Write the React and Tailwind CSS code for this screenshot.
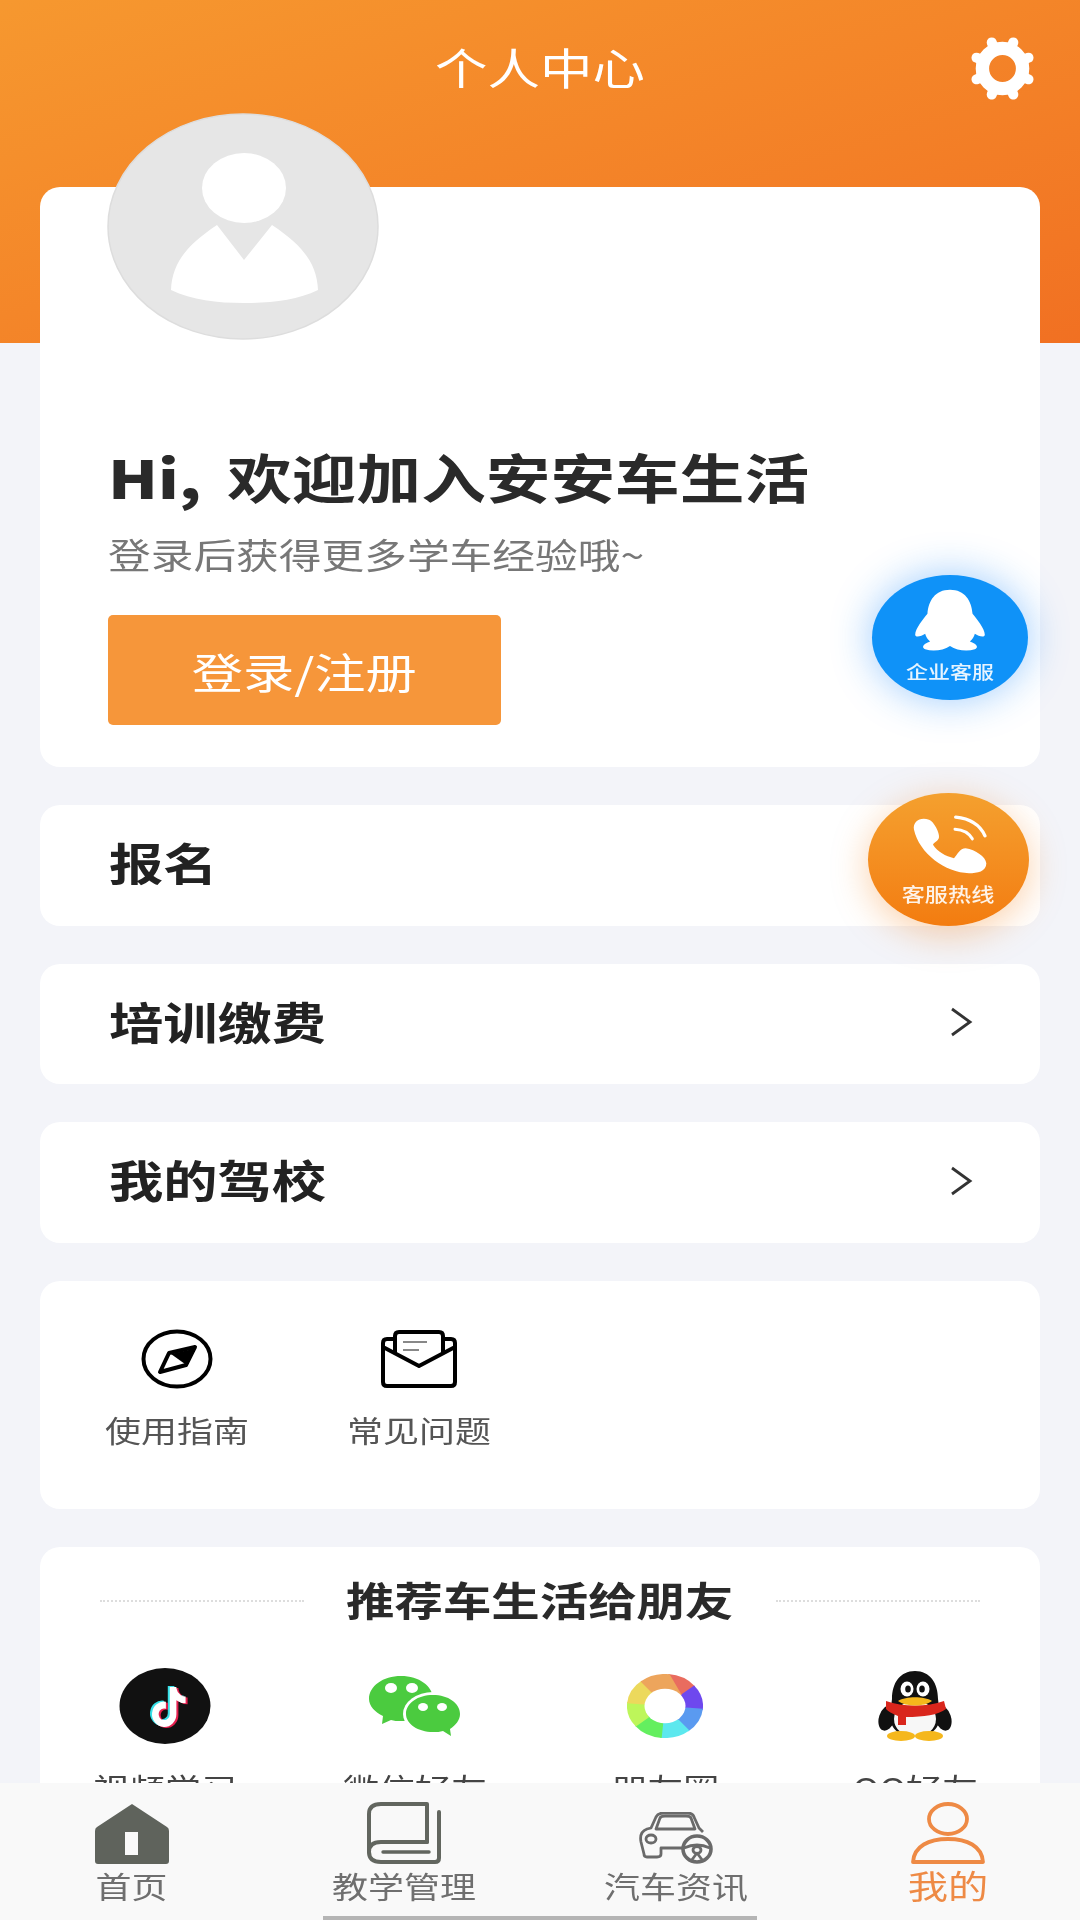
import React from 'react';

// all text in the shot is stretched sideways, so it goes through this
function Wide({ className = '', children }) {
  return <span className={'inline-block whitespace-nowrap scale-x-[1.22] ' + className}>{children}</span>;
}

function Chevron() {
  return (
    <svg width="24" height="32" viewBox="0 0 24 32" fill="none" stroke="#333" strokeWidth="2.8">
      <polyline points="3,3 21,16 3,29" />
    </svg>
  );
}

const GEAR_TEETH = [22.5, 67.5, 112.5, 157.5, 202.5, 247.5, 292.5, 337.5];

function GearIcon() {
  return (
    <svg className="justify-self-end -mt-[3px] -mr-[4px] w-[81px] h-[67px]" viewBox="0 0 100 100" fill="none" stroke="#fff">
      <circle cx="50" cy="50" r="30" strokeWidth="20" />
      {GEAR_TEETH.map((deg) => (
        <line key={deg} x1="50" y1="18" x2="50" y2="8" strokeWidth="15" strokeLinecap="round" transform={`rotate(${deg} 50 50)`} />
      ))}
    </svg>
  );
}

function Avatar() {
  return (
    <svg className="w-[272px] h-[227px]" viewBox="0 0 272 227">
      <ellipse cx="136" cy="113.5" rx="135" ry="112.5" fill="#e6e6e6" stroke="#dddddd" strokeWidth="1.5" />
      <ellipse cx="137" cy="75" rx="42" ry="35" fill="#fff" />
      <path d="M110 112 L137 147 L165 112 C195 132 210 150 211 177 C190 187 165 190 137 190 C110 190 85 187 64 177 C65 150 80 132 110 112 Z" fill="#fff" />
    </svg>
  );
}

function CompassIcon() {
  return (
    <svg className="w-[72px] h-[60px]" viewBox="0 0 72 60" fill="none" stroke="#000" strokeWidth="4">
      <ellipse cx="36" cy="30" rx="33.5" ry="27.5" />
      <path d="M54 18 L28 24 L19 43 L45 36 Z" strokeLinejoin="round" />
      <path d="M30 25 L52 20 L44 35 Z" fill="#000" stroke="none" />
    </svg>
  );
}

function EnvelopeIcon() {
  return (
    <svg className="w-[76px] h-[58px]" viewBox="0 0 76 58" fill="none" stroke="#000" strokeWidth="4" strokeLinejoin="round">
      <path d="M14 9 H6 Q2 9 2 13 V52 Q2 56 6 56 H70 Q74 56 74 52 V13 Q74 9 70 9 H62" />
      <path d="M2 17 L38 36 L74 17" />
      <path d="M14 24 V6 Q14 2 18 2 H58 Q62 2 62 6 V24" />
      <path d="M22 12 H46 M22 20 H38" stroke="#888" strokeWidth="2" />
    </svg>
  );
}

const TIKTOK = 'M448,209.91a210.06,210.06,0,0,1-122.77-39.25V349.38A162.55,162.55,0,1,1,185,188.31V278.2a74.62,74.62,0,1,0,52.23,71.18V0l88,0a121.18,121.18,0,0,0,1.86,22.17h0A122.18,122.18,0,0,0,381,102.39a121.43,121.43,0,0,0,67,20.14Z';

function TiktokIcon() {
  return (
    <svg className="w-[92px] h-[76px]" viewBox="0 0 92 76">
      <ellipse cx="46" cy="38" rx="45.5" ry="38" fill="#111" />
      <g transform="translate(31 18) scale(0.075 0.078)"><path d={TIKTOK} fill="#36e0e8" /></g>
      <g transform="translate(35 20) scale(0.075 0.078)"><path d={TIKTOK} fill="#e6204f" /></g>
      <g transform="translate(33 19) scale(0.075 0.078)"><path d={TIKTOK} fill="#fff" /></g>
    </svg>
  );
}

function WechatIcon() {
  return (
    <svg className="w-[92px] h-[60px]" viewBox="0 0 92 60">
      <path d="M32 0 C50 0 64 10 64 23 C64 36 50 45 32 45 C28 45 25 45 22 44 L13 48 L14 40 C6 36 0 30 0 23 C0 10 14 0 32 0 Z" fill="#4bcb3f" />
      <ellipse cx="64" cy="38" rx="30" ry="22" fill="#fff" />
      <path d="M64 19 C79 19 91 27 91 38 C91 44 87 49 81 53 L82 60 L74 55 C71 56 68 56 64 56 C49 56 37 48 37 38 C37 27 49 19 64 19 Z" fill="#4bcb3f" />
      <ellipse cx="22" cy="12" rx="6" ry="5" fill="#fff" />
      <ellipse cx="43" cy="12" rx="6" ry="5" fill="#fff" />
      <ellipse cx="54" cy="31" rx="5" ry="4" fill="#fff" />
      <ellipse cx="73" cy="31" rx="5" ry="4" fill="#fff" />
    </svg>
  );
}

// aperture ring for the moments icon, one blade per colour going clockwise
const BLADES = ['#e96c5f', '#6e48ee', '#5a9af0', '#5ce8ee', '#64ef5f', '#bdf65a', '#ecd95c', '#eda55c'];

function bladePath(i) {
  const pt = (deg, r) => {
    const a = (deg * Math.PI) / 180;
    return `${(50 + r * Math.cos(a)).toFixed(2)} ${(50 + r * Math.sin(a)).toFixed(2)}`;
  };
  const start = -85 + i * 45;
  return `M${pt(start, 50)} A50 50 0 0 1 ${pt(start + 47, 50)} L${pt(start + 92, 28)} L${pt(start, 28)} Z`;
}

function MomentsIcon() {
  return (
    <svg className="w-[76px] h-[64px]" viewBox="0 0 100 100" preserveAspectRatio="none">
      {BLADES.map((c, i) => <path key={c} d={bladePath(i)} fill={c} />)}
      <circle cx="50" cy="50" r="27" fill="#fff" />
    </svg>
  );
}

function PenguinIcon() {
  return (
    <svg className="w-[74px] h-[70px]" viewBox="0 0 74 70">
      <ellipse cx="9" cy="47" rx="8" ry="13" fill="#111" transform="rotate(18 9 47)" />
      <ellipse cx="65" cy="47" rx="8" ry="13" fill="#111" transform="rotate(-18 65 47)" />
      <path d="M37 0 C52 0 60 12 60 28 L62 44 C62 60 50 66 37 66 C24 66 12 60 12 44 L14 28 C14 12 22 0 37 0 Z" fill="#111" />
      <ellipse cx="37" cy="48" rx="21" ry="18" fill="#f7f7f7" />
      <path d="M8 30 C25 36 49 36 66 30 L68 38 C60 44 46 46 28 46 L28 54 L20 54 L20 45 C14 43 10 40 8 38 Z" fill="#d9261c" />
      <ellipse cx="29" cy="18" rx="6.5" ry="7.5" fill="#fff" />
      <ellipse cx="45" cy="18" rx="6.5" ry="7.5" fill="#fff" />
      <ellipse cx="30" cy="18" rx="2.8" ry="3.5" fill="#111" />
      <ellipse cx="44" cy="18" rx="2.8" ry="3.5" fill="#111" />
      <path d="M20 30 C28 25 46 25 54 30 C46 36 28 36 20 30 Z" fill="#f5b71c" />
      <ellipse cx="23" cy="65" rx="14" ry="5" fill="#f5b71c" />
      <ellipse cx="51" cy="65" rx="14" ry="5" fill="#f5b71c" />
    </svg>
  );
}

function HomeIcon() {
  return (
    <svg className="w-[74px] h-[61px]" viewBox="0 0 74 61">
      <path d="M37 1 L72 24 Q74 25 74 28 V58 Q74 61 71 61 H3 Q0 61 0 58 V28 Q0 25 2 24 Z" fill="#5f635c" />
      <rect x="30" y="29" width="13" height="23" fill="#f9f9f9" />
    </svg>
  );
}

function BookIcon() {
  return (
    <svg className="w-[74px] h-[62px]" viewBox="0 0 74 62" fill="none" stroke="#62665f" strokeWidth="4" strokeLinejoin="round" strokeLinecap="round">
      <path d="M60 40 V2 H14 Q2 2 2 12 V50 Q2 60 14 60 H68 Q72 60 72 56 V10" />
      <path d="M60 40 H14 Q2 40 2 50" />
      <path d="M16 50 H62" strokeWidth="3.4" />
    </svg>
  );
}

function CarIcon() {
  return (
    <svg className="w-[74px] h-[52px]" viewBox="0 0 74 52" fill="none" stroke="#6a6a6a" strokeWidth="2.8" strokeLinejoin="round">
      <path d="M48 36 H22 V42 Q22 45 18 45 H8 Q5 45 5 42 L2 30 Q0 20 8 17 L12 16 L17 5 Q19 1 25 1 H48 Q54 1 55 5 L60 16 L64 20" />
      <path d="M17 17 L21 6 Q22 4 26 4 H47 Q51 4 52 6 L56 17 Z" />
      <ellipse cx="12" cy="27" rx="5" ry="4" />
      <ellipse cx="58" cy="37" rx="14" ry="13" strokeWidth="3.6" fill="#f9f9f9" />
      <path d="M45 36 Q58 30 71 36 M58 41 L52 49 M58 41 L64 49" />
      <ellipse cx="58" cy="38" rx="4" ry="3.5" />
    </svg>
  );
}

function PersonIcon() {
  return (
    <svg className="w-[74px] h-[62px]" viewBox="0 0 74 62" fill="none" stroke="#ee8a45" strokeWidth="3.8" strokeLinejoin="round">
      <ellipse cx="37" cy="17" rx="19" ry="15" />
      <path d="M2 60 C3 44 18 37 37 37 C56 37 71 44 72 60 Z" />
    </svg>
  );
}

function QqGhost() {
  return (
    <svg className="w-[70px] h-[62px]" viewBox="345 150 210 187">
      <path d="M450 152 C405 152 385 185 382 225 C370 240 345 270 345 288 C345 298 365 292 375 285 C378 295 382 302 390 308 C370 315 362 325 375 332 C400 340 430 335 450 322 C470 335 500 340 525 332 C538 325 530 315 510 308 C518 302 522 295 525 285 C535 292 555 298 555 288 C555 270 530 240 518 225 C515 185 495 152 450 152 Z" fill="#fff" />
    </svg>
  );
}

function PhoneGlyph() {
  return (
    <svg className="w-[80px] h-[62px]" viewBox="310 820 240 185" fill="none" stroke="#fff" strokeLinecap="round">
      <path d="M325 870 C320 845 345 830 370 840 C385 845 402 880 400 892 C398 905 385 905 382 915 C395 935 420 950 445 955 C455 945 462 925 480 925 C510 930 540 950 542 970 C542 995 515 1000 490 1000 C420 1000 340 940 325 870 Z" fill="#fff" stroke="none" />
      <path d="M450 832 Q515 838 538 888" strokeWidth="10" />
      <path d="M448 868 Q485 870 500 897" strokeWidth="9" />
    </svg>
  );
}

const rows = ['报名', '培训缴费', '我的驾校'];

const shares = [
  { label: '视频学习', icon: <TiktokIcon /> },
  { label: '微信好友', icon: <WechatIcon /> },
  { label: '朋友圈', icon: <MomentsIcon /> },
  { label: 'QQ好友', icon: <PenguinIcon /> },
];

const tabs = [
  { label: '首页', icon: <HomeIcon /> },
  { label: '教学管理', icon: <BookIcon /> },
  { label: '汽车资讯', icon: <CarIcon /> },
  { label: '我的', icon: <PersonIcon />, active: true },
];

export default function App() {
  return (
    <div className="relative flex flex-col w-[1080px] h-[1920px] overflow-hidden blur-[0.6px] bg-[#f3f4f9] font-['Noto_Sans_CJK_SC',sans-serif]">
      <div className="flex-1 min-h-0 overflow-hidden">
        {/* Header */}
        <div className="h-[343px] grid grid-cols-[1fr_auto_1fr] items-start pt-[38px] px-[41px] bg-gradient-to-br from-[#f6982f] to-[#f17022]">
          <div />
          <div className="pt-[7px] text-white text-[43px] leading-none"><Wide>个人中心</Wide></div>
          <GearIcon />
        </div>

        <div className="relative -mt-[156px] flex flex-col gap-[38px] px-10">
          {/* Login card */}
          <div className="relative h-[580px] rounded-[20px] bg-white pt-[263px] pl-[68px]">
            <div className="absolute -top-[74px] left-[67px]"><Avatar /></div>
            <h1 className="text-[53px] leading-none font-bold text-[#2a2a2a]">
              <Wide className="origin-left"><span className="font-black mr-[9px]">Hi,</span> 欢迎加入安安车生活</Wide>
            </h1>
            <p className="mt-[33px] text-[35px] leading-none text-[#777]">
              <Wide className="origin-left">登录后获得更多学车经验哦~</Wide>
            </p>
            <button className="mt-[44px] flex items-center justify-center w-[393px] h-[110px] rounded-[5px] bg-[#f6963a] text-white text-[42px]">
              <Wide>登录/注册</Wide>
            </button>
          </div>

          {/* Menu rows */}
          {rows.map((r) => (
            <div key={r} className="h-[120.5px] flex items-center justify-between pl-[69px] pr-[67px] pb-[3px] rounded-[20px] bg-white">
              <span className="pb-[3px] text-[44.5px] leading-none font-bold text-[#222]"><Wide className="origin-left">{r}</Wide></span>
              <Chevron />
            </div>
          ))}

          {/* Guide + FAQ */}
          <div className="h-[228px] grid grid-cols-[repeat(2,242px)] content-start pt-[48px] pl-[16px] rounded-[20px] bg-white">
            {[
              { label: '使用指南', icon: <CompassIcon /> },
              { label: '常见问题', icon: <EnvelopeIcon /> },
            ].map((g) => (
              <div key={g.label} className="flex flex-col items-center">
                <div className="h-[60px] flex items-center">{g.icon}</div>
                <div className="mt-[26px] text-[29.5px] leading-none text-[#555]"><Wide>{g.label}</Wide></div>
              </div>
            ))}
          </div>

          {/* Share card, runs under the tab bar */}
          <div className="rounded-[20px] bg-white pt-[32px] pb-10">
            <div className="flex items-center justify-between px-[60px]">
              <div className="w-[204px] mt-[6px] border-t-2 border-dotted border-[#dddddd]" />
              <span className="text-[39.7px] leading-none font-bold text-[#2a2a2a]"><Wide>推荐车生活给朋友</Wide></span>
              <div className="w-[204px] mt-[6px] border-t-2 border-dotted border-[#dddddd]" />
            </div>
            <div className="grid grid-cols-4 mt-[50px]">
              {shares.map((s) => (
                <div key={s.label} className="flex flex-col items-center">
                  <div className="h-[76px] flex items-center">{s.icon}</div>
                  <div className="mt-[29px] text-[29.5px] leading-none text-[#444]"><Wide>{s.label}</Wide></div>
                </div>
              ))}
            </div>
          </div>
        </div>
      </div>

      {/* Tab bar */}
      <div className="relative shrink-0 h-[137px] overflow-hidden bg-[#f9f9f9]">
        <div className="-ml-1 grid grid-cols-[repeat(4,272px)] pt-[14px]">
          {tabs.map((t) => (
            <div key={t.label} className="flex flex-col items-center">
              <div className="h-[67px] flex items-end">{t.icon}</div>
              <div className={t.active ? 'mt-[5px] text-[33px] leading-none text-[#ee8a45]' : 'mt-[7px] text-[29.5px] leading-none text-[#6f6f6f]'}>
                <Wide>{t.label}</Wide>
              </div>
            </div>
          ))}
        </div>
        <div className="absolute bottom-0 left-[323px] w-[434px] h-1 bg-[#b5b5b5]" />
      </div>

      {/* Floating service buttons */}
      <div className="absolute left-[872px] top-[575px] w-[156px] h-[125px] rounded-[50%] flex flex-col items-center pt-[14px] bg-[#0f92f8] shadow-[0_0_40px_rgba(20,130,250,0.42)]">
        <QqGhost />
        <div className="mt-[11px] text-[18px] leading-none font-medium text-white/90"><Wide>企业客服</Wide></div>
      </div>
      <div className="absolute left-[868px] top-[793px] w-[161px] h-[133px] rounded-[50%] flex flex-col items-center pt-[20px] bg-gradient-to-b from-[#f4a02e] to-[#f37c0f] shadow-[0_8px_36px_rgba(243,124,15,0.35)]">
        <PhoneGlyph />
        <div className="mt-[9px] text-[19px] leading-none font-medium text-white/90"><Wide>客服热线</Wide></div>
      </div>
    </div>
  );
}
